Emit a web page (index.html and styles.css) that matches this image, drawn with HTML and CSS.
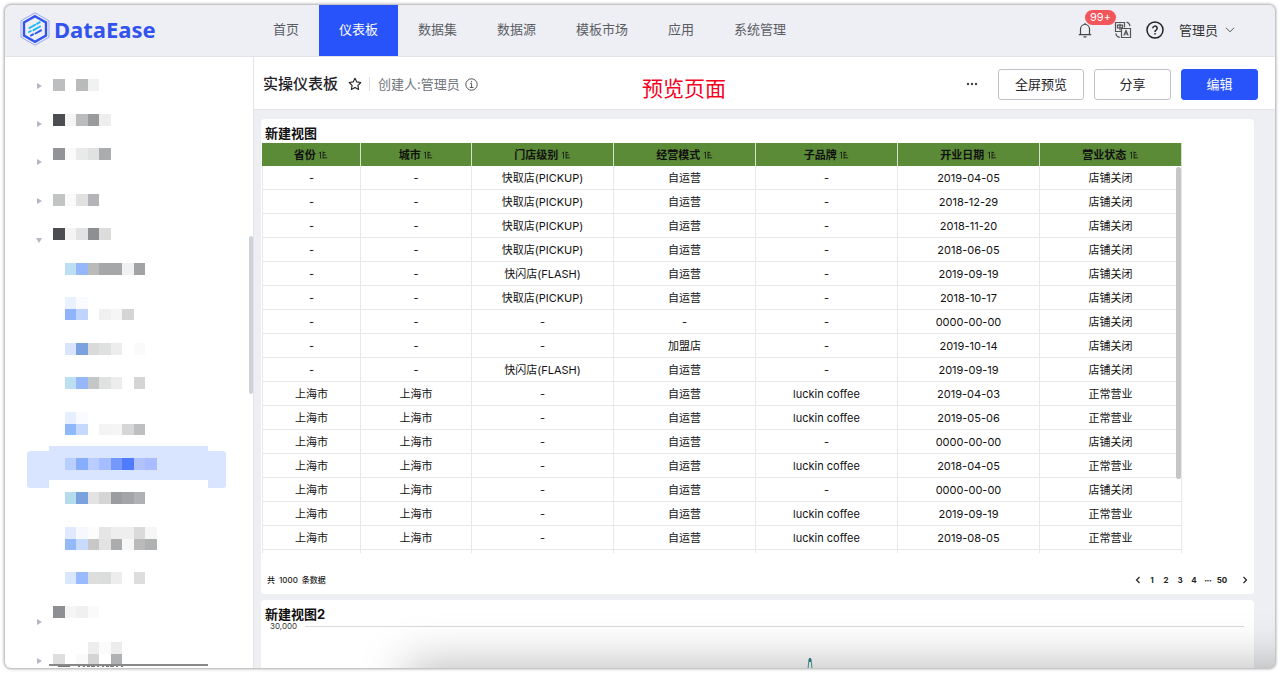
FILE: index.html
```html
<!DOCTYPE html>
<html lang="zh-CN">
<head>
<meta charset="utf-8">
<meta name="viewport" content="width=device-width, initial-scale=1">
<title>DataEase</title>
<link rel="stylesheet" href="styles.css">
</head>
<body>
<svg class="defs" aria-hidden="true">
  <symbol id="sort" viewBox="0 0 10 8"><path d="M2.500 7.500V1M1 2.300L2.500 .8M5 .5v7M5 1.500h2.200M5 4h3.200M5 6.800h4.200" fill="none" stroke="currentColor" stroke-width=".8"/></symbol>
</svg>
<div class="window">
  <header class="topbar">
    <a class="brand" href="#">
      <svg class="brand-mark" viewBox="0 0 30 34" fill="none" aria-hidden="true">
        <path d="M15 .8L29 8.800v16.400L15 33.200 1 25.200V8.800z" stroke="#8ba0f4" stroke-width=".9"/>
        <path d="M15 4.200L26 10.500v13L15 29.800 4 23.500v-13z" stroke="#3154ee" stroke-width="2.400"/>
        <path d="M9.500 16l5.500-3.200M17 11.800l2.800-1.600M9 20l1.800-1" stroke="#21b8f5" stroke-width="2" stroke-linecap="round"/>
        <path d="M13.500 18.200l6.500-3.700" stroke="#21b8f5" stroke-width="2" stroke-linecap="round"/>
        <path d="M11 23.500l2-1.200M15.500 21.500l5.500-3.200" stroke="#3154ee" stroke-width="2" stroke-linecap="round"/>
      </svg>
      <span>DataEase</span>
    </a>
    <nav class="nav">
      <a href="#">首页</a><a href="#" class="active">仪表板</a><a href="#">数据集</a><a href="#">数据源</a><a href="#">模板市场</a><a href="#">应用</a><a href="#">系统管理</a>
    </nav>
    <div class="tools">
      <button class="icon-btn bell" aria-label="消息">
        <svg width="14" height="16" viewBox="0 0 14 16" fill="none" stroke="#444" stroke-width="1.200"><path d="M2.500 12.500V7a4.500 4.500 0 0 1 9 0v5.500M.8 12.700h12.400M7 2.500V1M5.500 14.800h3"/></svg>
        <span class="badge">99+</span>
      </button>
      <button class="icon-btn" aria-label="语言">
        <svg width="18" height="18" viewBox="0 0 18 18" fill="none" stroke="#555" stroke-width="1.200"><path d="M7 10.500H1.500v-9h9V6.500M3.500 4.200h5v2.600h-5zM6 2.700v6.500M7.500 7.500h9v9h-9zM9.800 14.500L12 9.500l2.200 5M10.500 13h3M12.500 1.200q3 .5 3.500 4M1.800 12.300q.5 3.500 4 4"/></svg>
      </button>
      <button class="icon-btn" aria-label="帮助">
        <svg width="18" height="18" viewBox="0 0 18 18" fill="none" stroke="#222" stroke-width="1.500"><circle cx="9" cy="9" r="8"/><path d="M6.800 7.300a2.200 2.200 0 1 1 3.300 1.900q-1.100.6-1.100 1.700M9 12v1.600"/></svg>
      </button>
      <button class="user">管理员
        <svg width="10" height="6" viewBox="0 0 10 6" fill="none" stroke="#555"><path d="M1 .8l4 4 4-4"/></svg>
      </button>
    </div>
  </header>

  <div class="body">
    <aside class="sidebar">
      <ul class="tree">
        <li><i class="caret"></i><svg class="mosaic" shape-rendering="crispEdges"><g transform="translate(0 12) scale(11.5)"><rect width="1" height="1" fill="#bdbebf"/><rect x="2" width="1" height="1" fill="#b9baba"/><rect x="3" width="1" height="1" fill="#f1f1f1"/></g></svg></li>
        <li><i class="caret"></i><svg class="mosaic" shape-rendering="crispEdges"><g transform="translate(0 9) scale(11.5)"><rect width="1" height="1" fill="#4c4d50"/><rect x="1" width="1" height="1" fill="#f4f4f4"/><rect x="2" width="1" height="1" fill="#babbbc"/><rect x="3" width="1" height="1" fill="#999a9c"/><rect x="4" width="1" height="1" fill="#ededed"/></g></svg></li>
        <li><i class="caret"></i><svg class="mosaic" shape-rendering="crispEdges"><g transform="translate(0 5) scale(11.5)"><rect width="1" height="1" fill="#929397"/><rect x="1" width="1" height="1" fill="#fafafa"/><rect x="2" width="1" height="1" fill="#e9e9e9"/><rect x="3" width="1" height="1" fill="#e0e2e1"/><rect x="4" width="1" height="1" fill="#abacad"/></g></svg></li>
        <li><i class="caret"></i><svg class="mosaic" shape-rendering="crispEdges"><g transform="translate(0 12) scale(11.5)"><rect width="1" height="1" fill="#c2c3c3"/><rect x="1" width="1" height="1" fill="#fafafa"/><rect x="2" width="1" height="1" fill="#e1e1e2"/><rect x="3" width="1" height="1" fill="#b3b4b7"/></g></svg></li>
        <li><i class="caret open"></i><svg class="mosaic" shape-rendering="crispEdges"><g transform="translate(0 8) scale(11.5)"><rect width="1" height="1" fill="#4c4d50"/><rect x="1" width="1" height="1" fill="#f4f4f4"/><rect x="2" width="1" height="1" fill="#e1e2e3"/><rect x="3" width="1" height="1" fill="#8e8f92"/><rect x="4" width="1" height="1" fill="#dcdcdd"/></g></svg></li>
        <li><svg class="mosaic" shape-rendering="crispEdges"><g transform="translate(0 5) scale(11.5)"><rect x="1" width="1" height="1" fill="#bcdff1"/><rect x="2" width="1" height="1" fill="#97b7fb"/><rect x="3" width="1" height="1" fill="#bababb"/><rect x="4" width="2" height="1" fill="#a6a7a8"/><rect x="6" width="1" height="1" fill="#f1f1f1"/><rect x="7" width="1" height="1" fill="#a2a3a4"/></g></svg></li>
        <li><svg class="mosaic" shape-rendering="crispEdges"><g transform="translate(0 0) scale(11.5)"><rect x="1" width="1" height="1" fill="#e9f0fe"/><rect x="2" width="1" height="1" fill="#fafbff"/><rect x="1" y="1" width="1" height="1" fill="#8fb4fb"/><rect x="2" y="1" width="1" height="1" fill="#c0d5fd"/><rect x="4" y="1" width="1" height="1" fill="#f0f0f0"/><rect x="5" y="1" width="1" height="1" fill="#f5f5f5"/><rect x="6" y="1" width="1" height="1" fill="#d4d5d7"/></g></svg></li>
        <li><svg class="mosaic" shape-rendering="crispEdges"><g transform="translate(0 8) scale(11.5)"><rect x="1" width="1" height="1" fill="#dae5fd"/><rect x="2" width="1" height="1" fill="#7aa2de"/><rect x="3" width="1" height="1" fill="#dadada"/><rect x="4" width="1" height="1" fill="#dfe1e0"/><rect x="5" width="1" height="1" fill="#ededed"/><rect x="7" width="1" height="1" fill="#fafafa"/></g></svg></li>
        <li><svg class="mosaic" shape-rendering="crispEdges"><g transform="translate(0 4) scale(11.5)"><rect x="1" width="1" height="1" fill="#bcdff1"/><rect x="2" width="1" height="1" fill="#97b7fb"/><rect x="3" width="1" height="1" fill="#c5c6c8"/><rect x="4" width="1" height="1" fill="#e0e2e1"/><rect x="5" width="1" height="1" fill="#ededed"/><rect x="7" width="1" height="1" fill="#d5d5d6"/></g></svg></li>
        <li><svg class="mosaic" shape-rendering="crispEdges"><g transform="translate(0 0) scale(11.5)"><rect x="1" width="1" height="1" fill="#e6effe"/><rect x="2" width="1" height="1" fill="#fafbff"/><rect x="1" y="1" width="1" height="1" fill="#8fb8fb"/><rect x="2" y="1" width="1" height="1" fill="#c5d9fd"/><rect x="4" y="1" width="1" height="1" fill="#f4f4f4"/><rect x="5" y="1" width="1" height="1" fill="#f5f5f5"/><rect x="6" y="1" width="1" height="1" fill="#d6d6d7"/><rect x="7" y="1" width="1" height="1" fill="#bebfc0"/></g></svg></li>
        <li class="selected"><svg class="mosaic" shape-rendering="crispEdges"><g transform="translate(0 8) scale(11.5)"><rect x="1" width="1" height="1" fill="#bacefe"/><rect x="2" width="1" height="1" fill="#85adfc"/><rect x="3" width="1" height="1" fill="#b9cbff"/><rect x="4" width="1" height="1" fill="#a6bdff"/><rect x="5" width="1" height="1" fill="#7598ff"/><rect x="6" width="1" height="1" fill="#507bff"/><rect x="7" width="1" height="1" fill="#b0c2ff"/><rect x="8" width="1" height="1" fill="#a8bcff"/></g></svg></li>
        <li><svg class="mosaic" shape-rendering="crispEdges"><g transform="translate(0 4) scale(11.5)"><rect x="1" width="1" height="1" fill="#b4dcec"/><rect x="2" width="1" height="1" fill="#7aa2de"/><rect x="3" width="1" height="1" fill="#e3e3e3"/><rect x="4" width="1" height="1" fill="#d5d5d6"/><rect x="5" width="1" height="1" fill="#9b9c9e"/><rect x="6" width="1" height="1" fill="#a3a4a7"/><rect x="7" width="1" height="1" fill="#b0b1b2"/></g></svg></li>
        <li><svg class="mosaic" shape-rendering="crispEdges"><g transform="translate(0 0) scale(11.5)"><rect x="1" width="1" height="1" fill="#e0e9fe"/><rect x="2" width="1" height="1" fill="#f5f9ff"/><rect x="3" width="1" height="1" fill="#fcfcfc"/><rect x="4" width="1" height="1" fill="#e5e5e5"/><rect x="5" width="2" height="1" fill="#eeeeee"/><rect x="7" width="1" height="1" fill="#dadada"/><rect x="8" width="1" height="1" fill="#f6f6f6"/><rect x="1" y="1" width="1" height="1" fill="#94b9fb"/><rect x="2" y="1" width="1" height="1" fill="#c8dafe"/><rect x="3" y="1" width="1" height="1" fill="#c8c8c9"/><rect x="4" y="1" width="1" height="1" fill="#e3e3e3"/><rect x="5" y="1" width="1" height="1" fill="#abacad"/><rect x="6" y="1" width="1" height="1" fill="#f7f7f7"/><rect x="7" y="1" width="1" height="1" fill="#bababb"/><rect x="8" y="1" width="1" height="1" fill="#b0b1b3"/></g></svg></li>
        <li><svg class="mosaic" shape-rendering="crispEdges"><g transform="translate(0 7) scale(11.5)"><rect x="1" width="1" height="1" fill="#dae7fb"/><rect x="2" width="1" height="1" fill="#99bafc"/><rect x="3" width="1" height="1" fill="#dcdddd"/><rect x="4" width="1" height="1" fill="#dbdddc"/><rect x="5" width="1" height="1" fill="#ededed"/><rect x="7" width="1" height="1" fill="#dddddd"/></g></svg></li>
        <li><i class="caret"></i><svg class="mosaic" shape-rendering="crispEdges"><g transform="translate(0 3) scale(11.5)"><rect width="1" height="1" fill="#8e8f93"/><rect x="1" width="1" height="1" fill="#f5f5f5"/><rect x="2" width="1" height="1" fill="#f0f0f0"/><rect x="3" width="1" height="1" fill="#fafafa"/></g></svg></li>
        <li class="last"><i class="caret"></i><svg class="mosaic" shape-rendering="crispEdges"><g transform="translate(0 0) scale(11.5)"><rect x="3" width="1" height="1" fill="#ededed"/><rect x="4" width="1" height="1" fill="#fbfbfb"/><rect x="5" width="1" height="1" fill="#ececec"/><rect y="1" width="1" height="1" fill="#dedede"/><rect x="2" y="1" width="1" height="1" fill="#fafafa"/><rect x="3" y="1" width="1" height="1" fill="#d4d4d4"/><rect x="5" y="1" width="1" height="1" fill="#b0b1b2"/></g><path d="M5 24.500h12" stroke="#777"/><path d="M25 24.500h46" stroke="#777" stroke-dasharray="2 3 2 2 3 1 4 2"/></svg></li>
      </ul>
      <div class="side-scroll"></div>
    </aside>

    <main class="main">
      <div class="toolbar">
        <h1>实操仪表板</h1>
        <button class="icon-btn star" aria-label="收藏"><svg width="14" height="14" viewBox="0 0 14 14" fill="none" stroke="#222" stroke-width="1.100" stroke-linejoin="round"><path d="M7 1.200l1.800 3.700 4 .6-2.900 2.900.7 4.100L7 10.600l-3.600 1.900.7-4.100L1.200 5.500l4-.6z"/></svg></button>
        <span class="divider"></span>
        <span class="creator">创建人:管理员</span>
        <svg class="info" width="13" height="13" viewBox="0 0 13 13" fill="none" stroke="#555"><circle cx="6.500" cy="6.500" r="5.700"/><path d="M5.300 5.500h1.300v4M4.800 9.500h3.600M6.500 3v1.300"/></svg>
        <span class="note">预览页面</span>
        <div class="actions">
          <button class="icon-btn more" aria-label="更多"><svg width="12" height="4" viewBox="0 0 12 4" fill="#444"><circle cx="2" cy="2" r="1.200"/><circle cx="6" cy="2" r="1.200"/><circle cx="10" cy="2" r="1.200"/></svg></button>
          <button class="btn wide">全屏预览</button>
          <button class="btn">分享</button>
          <button class="btn primary">编辑</button>
        </div>
      </div>

      <div class="canvas">
        <section class="card">
          <h2>新建视图</h2>
          <div class="table-view">
            <table>
              <colgroup><col class="c-prov"><col class="c-city"><col><col><col><col><col></colgroup>
              <thead><tr>
                <th>省份 <svg><use href="#sort"/></svg></th><th>城市 <svg><use href="#sort"/></svg></th><th>门店级别 <svg><use href="#sort"/></svg></th><th>经营模式 <svg><use href="#sort"/></svg></th><th>子品牌 <svg><use href="#sort"/></svg></th><th>开业日期 <svg><use href="#sort"/></svg></th><th>营业状态 <svg><use href="#sort"/></svg></th>
              </tr></thead>
              <tbody>
                <tr><td>-</td><td>-</td><td>快取店(PICKUP)</td><td>自运营</td><td>-</td><td>2019-04-05</td><td>店铺关闭</td></tr>
                <tr><td>-</td><td>-</td><td>快取店(PICKUP)</td><td>自运营</td><td>-</td><td>2018-12-29</td><td>店铺关闭</td></tr>
                <tr><td>-</td><td>-</td><td>快取店(PICKUP)</td><td>自运营</td><td>-</td><td>2018-11-20</td><td>店铺关闭</td></tr>
                <tr><td>-</td><td>-</td><td>快取店(PICKUP)</td><td>自运营</td><td>-</td><td>2018-06-05</td><td>店铺关闭</td></tr>
                <tr><td>-</td><td>-</td><td>快闪店(FLASH)</td><td>自运营</td><td>-</td><td>2019-09-19</td><td>店铺关闭</td></tr>
                <tr><td>-</td><td>-</td><td>快取店(PICKUP)</td><td>自运营</td><td>-</td><td>2018-10-17</td><td>店铺关闭</td></tr>
                <tr><td>-</td><td>-</td><td>-</td><td>-</td><td>-</td><td>0000-00-00</td><td>店铺关闭</td></tr>
                <tr><td>-</td><td>-</td><td>-</td><td>加盟店</td><td>-</td><td>2019-10-14</td><td>店铺关闭</td></tr>
                <tr><td>-</td><td>-</td><td>快闪店(FLASH)</td><td>自运营</td><td>-</td><td>2019-09-19</td><td>店铺关闭</td></tr>
                <tr><td>上海市</td><td>上海市</td><td>-</td><td>自运营</td><td>luckin coffee</td><td>2019-04-03</td><td>正常营业</td></tr>
                <tr><td>上海市</td><td>上海市</td><td>-</td><td>自运营</td><td>luckin coffee</td><td>2019-05-06</td><td>正常营业</td></tr>
                <tr><td>上海市</td><td>上海市</td><td>-</td><td>自运营</td><td>-</td><td>0000-00-00</td><td>店铺关闭</td></tr>
                <tr><td>上海市</td><td>上海市</td><td>-</td><td>自运营</td><td>luckin coffee</td><td>2018-04-05</td><td>正常营业</td></tr>
                <tr><td>上海市</td><td>上海市</td><td>-</td><td>自运营</td><td>-</td><td>0000-00-00</td><td>店铺关闭</td></tr>
                <tr><td>上海市</td><td>上海市</td><td>-</td><td>自运营</td><td>luckin coffee</td><td>2019-09-19</td><td>正常营业</td></tr>
                <tr><td>上海市</td><td>上海市</td><td>-</td><td>自运营</td><td>luckin coffee</td><td>2019-08-05</td><td>正常营业</td></tr>
                <tr><td></td><td></td><td></td><td></td><td></td><td></td><td></td></tr>
              </tbody>
            </table>
            <div class="table-scroll"></div>
          </div>
          <div class="pager">
            <span class="total"><span>共</span><span>1000</span><span>条数据</span></span>
            <button aria-label="上一页"><svg width="6" height="8" viewBox="0 0 6 8" fill="none" stroke="#222" stroke-width="1.200"><path d="M4.500 1l-3 3 3 3"/></svg></button>
            <button>1</button><button>2</button><button>3</button><button>4</button><span class="dots">•••</span><button>50</button>
            <button class="next" aria-label="下一页"><svg width="6" height="8" viewBox="0 0 6 8" fill="none" stroke="#222" stroke-width="1.200"><path d="M1.500 1l3 3-3 3"/></svg></button>
          </div>
        </section>
        <section class="card chart">
          <h2>新建视图2</h2>
          <div class="axis"><span>30,000</span><i></i></div>
          <svg class="spike" width="6" height="40" viewBox="0 0 6 40" fill="none" stroke="#4b9a9b"><path d="M1 40V12l1-10h2l1 10v28"/><path d="M2 1h2v4H2z" fill="#2f8385" stroke="none"/></svg>
        </section>
      </div>
    </main>
  </div>
  <div class="shade"></div>
</div>
</body>
</html>
```

FILE: styles.css
```css
* { box-sizing: border-box; }
body {
  margin: 0;
  padding: 5px;
  height: 100vh;
  overflow: hidden;
  background: #fff;
  color: #1f2329;
  font: 13px/20px Inter, "Noto Sans CJK SC", sans-serif;
}
button { padding: 0; border: 0; background: none; color: inherit; font: inherit; cursor: pointer; }
a { color: inherit; text-decoration: none; }
h1, h2, ul { margin: 0; padding: 0; }
svg { display: block; flex: none; }
.defs { position: absolute; width: 0; height: 0; }

.window {
  position: relative;
  display: flex;
  flex-direction: column;
  height: 100%;
  overflow: hidden;
  border-radius: 6px;
  background: #fff;
}
body::after {
  content: "";
  position: absolute;
  inset: 5px;
  border-radius: 6px;
  box-shadow: 0 0 3px 1px rgba(0, 0, 0, .35);
  pointer-events: none;
}

/* top bar */
.topbar {
  display: flex;
  flex: none;
  height: 52px;
  border-bottom: 1px solid #e2e3e8;
  background: #eeeff5;
}
.brand {
  display: flex;
  align-items: center;
  gap: 4px;
  width: 248px;
  padding: 0 0 4px 15px;
  color: #3253ee;
  font: bold 22px/28px "Noto Sans", sans-serif;
}
.brand-mark { width: 30px; height: 34px; }
.nav { display: flex; color: #5b5d63; }
.nav a { padding: 0 20px; line-height: 48px; }
.nav .active { background: #2853fb; color: #fff; }
.tools { display: flex; align-items: center; margin-left: auto; padding: 0 40px 2px 0; }
.icon-btn { position: relative; display: block; }
.tools .icon-btn + .icon-btn { margin-left: 14px; }
.tools .icon-btn.bell + .icon-btn { margin-left: 22px; }
.badge {
  position: absolute;
  left: 7px;
  bottom: 13px;
  padding: 0 5px;
  border-radius: 8px;
  background: #f2555a;
  color: #fff;
  font-size: 11px;
  line-height: 15px;
}
.user { display: flex; align-items: center; gap: 7px; margin-left: 15px; color: #333; }

.body { display: flex; flex: 1; min-height: 0; }

/* resource tree */
.sidebar { position: relative; width: 249px; flex: none; padding-top: 10px; overflow: hidden; border-right: 1px solid #e4e5e8; }
.tree { list-style: none; }
.tree li { position: relative; display: flex; height: 38px; padding-left: 48px; }
.tree li:nth-child(3n) { height: 39px; }
.mosaic { position: relative; width: 160px; height: 38px; }
.caret {
  position: absolute;
  left: 32px;
  top: 16px;
  border: solid transparent;
  border-width: 3px 0 3px 5px;
  border-left-color: #b4b8c3;
}
.caret.open { left: 31px; top: 18px; border-width: 5px 3px 0; border-color: #b4b8c3 transparent transparent; }
.selected::before {
  content: "";
  position: absolute;
  inset: 1px 27px 0 22px;
  border-radius: 3px;
  background: linear-gradient(#fff, #fff) 22px 29px / 159px 10px no-repeat #d9e4ff;
}
.selected::after {
  content: "";
  position: absolute;
  left: 44px;
  top: -4px;
  width: 159px;
  height: 5px;
  background: #d9e4ff;
}
.last::after {
  content: "";
  position: absolute;
  left: 44px;
  top: 22px;
  width: 159px;
  height: 2px;
  background: #888;
}
.side-scroll { position: absolute; right: 0; top: 179px; width: 4px; height: 158px; border-radius: 2px; background: #cfd1dd; }

/* toolbar */
.main { display: flex; flex: 1; flex-direction: column; min-width: 0; }
.toolbar {
  position: relative;
  display: flex;
  flex: none;
  align-items: center;
  height: 53px;
  padding: 2px 17px 0 9px;
  border-bottom: 1px solid #e2e4e7;
}
h1 { font-size: 15px; font-weight: 500; line-height: 24px; }
.star { margin-left: 10px; }
.divider { width: 1px; height: 14px; margin: 0 8px 0 7px; background: #dcdfe6; }
.creator { color: #6f737c; }
.info { margin-left: 5px; }
.note { position: absolute; left: 38%; top: 17px; color: #f5001d; font-size: 21px; line-height: 30px; }
.actions { display: flex; align-items: center; gap: 10px; margin-left: auto; }
.more { margin-right: 10px; }
.btn { width: 77px; height: 31px; border: 1px solid #bfc2c8; border-radius: 3px; background: #fff; }
.btn.wide { width: 86px; }
.btn.primary { border-color: #2853fb; background: #2853fb; color: #fff; }

/* dashboard */
.canvas { flex: 1; min-height: 0; padding: 9px 21px 0 7px; overflow: hidden; background: #eeeff2; }
.card { position: relative; margin-bottom: 6px; border-radius: 4px; background: #fff; }
h2 { padding: 4px 0 0 4px; color: #111; font-size: 13px; font-weight: bold; line-height: 20px; }
.table-view { position: relative; max-height: 410px; margin: 0 72px 0 1px; overflow: hidden; }
table { width: 100%; border-collapse: separate; border-spacing: 0; table-layout: fixed; color: #111; font-size: 11px; line-height: 16px; }
.c-prov { width: 99px; }
.c-city { width: 111px; }
th { height: 23px; padding: 0; border-right: 1px solid #d7e2cb; background: #5b8b37; font-weight: bold; }
th svg { display: inline-block; width: 10px; height: 8px; }
td { height: 24px; padding: 0; border: solid #e8e8e6; border-width: 0 1px 1px 0; text-align: center; }
td:first-child { border-left-width: 1px; }
.table-scroll { position: absolute; right: 1px; top: 24px; width: 5px; height: 312px; border-radius: 3px; background: #c6c6c6; }
.pager { display: flex; align-items: center; height: 41px; padding: 12px 2px 0 6px; color: #222; font-size: 8px; font-weight: bold; line-height: 12px; }
.total { display: flex; gap: 4px; margin-right: auto; font-weight: 500; }
.pager button { display: flex; justify-content: center; min-width: 14px; }
.pager .next { margin-left: 9px; }
.dots { width: 14px; font-size: 5px; text-align: center; }
.chart { height: 200px; }
.axis { display: flex; align-items: center; gap: 8px; padding: 0 10px 0 9px; color: #333; font-size: 8px; line-height: 8px; margin-top: -2px; }
.axis i { flex: 1; height: 1px; background: #d9dadb; }
.spike { position: absolute; left: 55%; top: 57px; }
.shade {
  position: absolute;
  left: 32%;
  right: -60px;
  top: 100%;
  height: 60px;
  box-shadow: 0 0 48px 4px rgba(0, 0, 0, .27);
  pointer-events: none;
}
```
